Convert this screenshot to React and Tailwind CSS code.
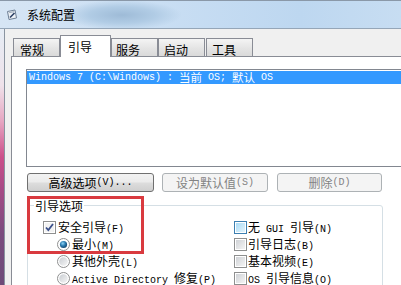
import React from "react";

function T({ s, mono = "text-[10px]" }) {
  const parts = s.match(/[\x00-\x7F]+|[^\x00-\x7F]+/g) || [];
  return parts.map((p, i) =>
    /[\x00-\x7F]/.test(p[0]) ? (
      <span key={i} className={"font-['Liberation_Mono',monospace] whitespace-pre " + mono}>
        {p}
      </span>
    ) : (
      <span key={i}>{p}</span>
    )
  );
}

function Checkbox({ checked, hover }) {
  return (
    <svg width="13" height="13" viewBox="0 0 13 13" className="shrink-0">
      <defs>
        <linearGradient id="cbg" x1="0" y1="0" x2="1" y2="1">
          <stop offset="0" stopColor="#cfd2d6" />
          <stop offset="1" stopColor="#f4f4f4" />
        </linearGradient>
        <linearGradient id="cbh" x1="0" y1="0" x2="1" y2="1">
          <stop offset="0" stopColor="#a9dbf6" />
          <stop offset="1" stopColor="#e2f4fd" />
        </linearGradient>
      </defs>
      <rect x="0.5" y="0.5" width="12" height="12" fill="#fff" stroke={hover ? "#3c7fb1" : "#8e8f8f"} />
      <rect x="2" y="2" width="9" height="9" fill={hover ? "url(#cbh)" : checked ? "#f2f2f2" : "url(#cbg)"} />
      {checked && (
        <path d="M3 6.5 L5.3 9 L10 3" fill="none" stroke="#3a4f8a" strokeWidth="1.8" />
      )}
    </svg>
  );
}

function Radio({ checked }) {
  return (
    <svg width="13" height="13" viewBox="0 0 13 13" className="shrink-0">
      <defs>
        <radialGradient id="rdot" cx="0.4" cy="0.35" r="0.7">
          <stop offset="0" stopColor="#8fd3f5" />
          <stop offset="0.5" stopColor="#2a7bb0" />
          <stop offset="1" stopColor="#113f66" />
        </radialGradient>
        <linearGradient id="rbg" x1="0" y1="0" x2="1" y2="1">
          <stop offset="0" stopColor="#c9cdd2" />
          <stop offset="1" stopColor="#f6f6f6" />
        </linearGradient>
      </defs>
      <circle cx="6.5" cy="6.5" r="6" fill="#fff" stroke="#8e8f8f" />
      {checked ? (
        <circle cx="6.5" cy="6.5" r="3.6" fill="url(#rdot)" />
      ) : (
        <circle cx="6.5" cy="6.5" r="4.3" fill="url(#rbg)" />
      )}
    </svg>
  );
}

function Tab({ label, w, selected, pl }) {
  if (selected) {
    return (
      <div
        className={
          "relative z-10 h-[22px] -mb-[1px] border border-b-0 border-[#898c95] bg-white flex items-start pt-[3px] " +
          w + " " + pl
        }
      >
        {label}
      </div>
    );
  }
  return (
    <div
      className={
        "h-[18px] border border-b-0 border-[#898c95] bg-[linear-gradient(to_bottom,#f4f4f4,#e4e4e4_55%,#dadada)] flex items-start pt-[3px] " +
        w + " " + pl
      }
    >
      {label}
    </div>
  );
}

export default function App() {
  return (
    <div className="relative w-[401px] h-[285px] overflow-hidden flex flex-col bg-[#f0f0f0] text-[12px] leading-[15px] text-black font-['Noto_Sans_CJK_SC','Noto_Sans',sans-serif]">
      {/* title bar */}
      <div className="h-[29px] shrink-0 flex items-center border-t border-[#8a98a8] border-b border-b-[#95a6b8] bg-[radial-gradient(ellipse_60px_15px_at_122px_14px,#9ebbd7,#b1cce5_55%,transparent_100%),linear-gradient(to_right,#d6e5f4,#c9def3_40%,#bdd7f0_75%,#c7ddf2)] pl-[6px] gap-[9px]">
        <svg width="12" height="12" viewBox="0 0 12 12">
          <path d="M1.5 2.5 L9 1 L10.5 9 L3 10.5 Z" fill="#eef2f6" stroke="#6e7f94" strokeWidth="1" />
          <path d="M3.2 3.6 L8.2 2.7" stroke="#9aa8b8" strokeWidth="1" />
          <path d="M4 8.5 L8.5 4" stroke="#2a3e62" strokeWidth="1.6" />
        </svg>
        <span className="text-[12px]">系统配置</span>
      </div>

      <div className="flex flex-1 min-h-0">
        <div className="w-[4px] shrink-0 bg-[linear-gradient(to_bottom,#e6edf5_0%,#efe2ea_22%,#e6a6c2_36%,#cc4f8a_50%,#a84a86_62%,#7a4b7e_80%,#6d4a78_100%)]" />
        <div className="w-[1px] shrink-0 bg-[#8a94a0]" />
        <div className="flex-1 min-w-0 pl-[6px] pt-[6px] flex flex-col">
          {/* tabs */}
          <div className="flex items-end h-[21px] pl-[2px] shrink-0">
            <Tab label="常规" w="w-[47px]" pl="pl-[6px]" />
            <Tab label="引导" w="w-[51px]" pl="pl-[7px]" selected />
            <Tab label="服务" w="w-[47px]" pl="pl-[4px]" />
            <Tab label="启动" w="w-[47px]" pl="pl-[5px]" />
            <div className="w-[1px]" />
            <Tab label="工具" w="w-[47px]" pl="pl-[5px]" />
          </div>

          {/* panel */}
          <div className="flex-1 border-l border-t border-[#898c95] bg-white pl-[14px] pt-[12px] flex flex-col items-start">
            <div className="w-[400px] h-[98px] shrink-0 border border-[#828790] bg-white pt-[1px] pl-[0px]">
              <div className="h-[13px] bg-[#3399ff] text-white flex items-center pl-[2px] leading-[13px] whitespace-pre">
                <span className="font-['Liberation_Mono',monospace] text-[10px]">Windows 7 (C:\Windows) : </span>
                <span className="text-[11.5px]">当前</span>
                <span className="font-['Liberation_Mono',monospace] text-[10px]"> OS; </span>
                <span className="text-[11.5px]">默认</span>
                <span className="font-['Liberation_Mono',monospace] text-[10px]"> OS</span>
              </div>
            </div>

            <div className="flex mt-[6px] ml-[1px] gap-[8px]">
              <div className="w-[127px] h-[19px] rounded-[3px] border border-[#707070] bg-[linear-gradient(to_bottom,#f2f2f2_0%,#ebebeb_48%,#dddddd_52%,#cfcfcf_100%)] flex items-center justify-center">
                <T s="高级选项(V)..." />
              </div>
              <div className="w-[106px] h-[19px] rounded-[3px] border border-[#adb2b5] bg-[#f4f4f4] text-[#838383] flex items-center justify-center">
                <T s="设为默认值(S)" />
              </div>
              <div className="ml-[1px] w-[105px] h-[19px] rounded-[3px] border border-[#adb2b5] bg-[#f4f4f4] text-[#838383] flex items-center justify-center">
                <T s="删除(D)" />
              </div>
            </div>

            <fieldset className="ml-[1px] mt-[6px] w-[356px] h-[120px] border border-[#d5dfe5] rounded-[3px] pt-[6px]">
              <legend className="ml-[6px] px-[1px] leading-[15px]">引导选项</legend>
              <div className="grid grid-cols-[191px_1fr] pl-[15px]">
                <div className="flex flex-col">
                  <div className="h-[17px] flex items-center gap-[2px]">
                    <Checkbox checked />
                    <span><T s="安全引导(F)" /></span>
                  </div>
                  <div className="h-[17px] flex items-center gap-[2px] pl-[14px]">
                    <Radio checked />
                    <span><T s="最小(M)" /></span>
                  </div>
                  <div className="h-[17px] flex items-center gap-[2px] pl-[14px]">
                    <Radio />
                    <span><T s="其他外壳(L)" /></span>
                  </div>
                  <div className="h-[17px] flex items-center gap-[2px] pl-[14px] whitespace-nowrap">
                    <Radio />
                    <span><T s="Active Directory 修复(P)" /></span>
                  </div>
                </div>
                <div className="flex flex-col">
                  <div className="h-[17px] flex items-center gap-[1px]">
                    <Checkbox hover />
                    <span><T s="无 GUI 引导(N)" /></span>
                  </div>
                  <div className="h-[17px] flex items-center gap-[1px]">
                    <Checkbox />
                    <span><T s="引导日志(B)" /></span>
                  </div>
                  <div className="h-[17px] flex items-center gap-[1px]">
                    <Checkbox />
                    <span><T s="基本视频(E)" /></span>
                  </div>
                  <div className="h-[17px] flex items-center gap-[1px] whitespace-nowrap">
                    <Checkbox />
                    <span><T s="OS 引导信息(O)" /></span>
                  </div>
                </div>
              </div>
            </fieldset>
          </div>
        </div>
      </div>

      {/* red annotation rectangle */}
      <div className="absolute left-[27px] top-[196px] w-[117px] h-[58px] border-[3px] border-[#d93a3f] pointer-events-none" />
    </div>
  );
}
